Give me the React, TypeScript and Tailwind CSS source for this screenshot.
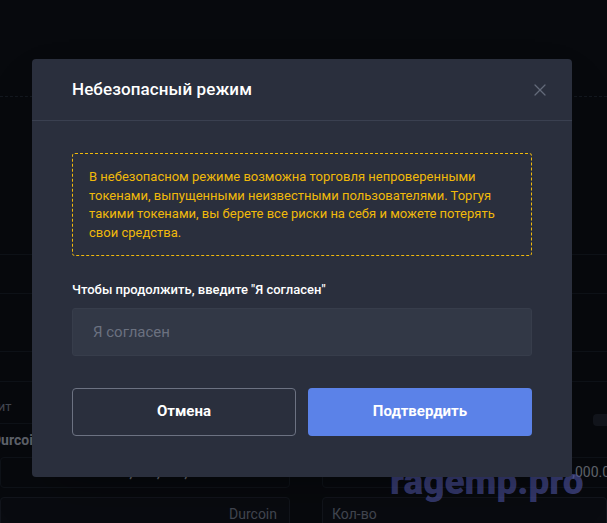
import { X } from "lucide-react";

const App = () => {
    return (
        <div className="relative w-[607px] h-[523px] overflow-hidden bg-[#07090d] font-['Roboto',sans-serif]">
            {/* page behind the overlay */}
            <div className="flex flex-col h-full opacity-60">
                <div className="h-[97px] shrink-0 border-b border-dashed border-[#1c222b]"></div>
                <div className="h-[158px] shrink-0 border-b border-[#141820]"></div>
                <div className="h-[39px] shrink-0 border-b border-[#141820]"></div>
                <div className="h-[58px] shrink-0 border-b border-[#141820]"></div>
                <div className="h-[30px] shrink-0 border-b border-[#141820]"></div>
                <div className="flex gap-8 shrink-0">
                    <div className="w-[290px] flex flex-col">
                        <div className="h-[42px] flex items-center pt-[8px] text-[13px] text-[#6b7280] border-b border-[#141820] -ml-[12px]">мит</div>
                        <div className="h-[33px] flex items-center text-[14px] font-bold text-[#9aa0ab] -ml-[8px]">Durcoin</div>
                        <div className="h-[31px] rounded border border-[#141820] flex items-center justify-end gap-3 pr-3 text-[14px]">
                            <span className="font-bold text-[#9aa0ab]">1,000,000,000</span>
                            <span className="text-[#6b7280]">Максим</span>
                        </div>
                        <div className="mt-[9px] h-[34px] rounded border border-[#1a1e26] bg-[#0b0d12] flex items-center justify-end pr-3 text-[14px] text-[#6b7280]">Durcoin</div>
                    </div>
                    <div className="flex-1 flex flex-col">
                        <div className="h-[75px] flex items-center justify-end -mr-2">
                            <div className="w-[22px] h-[12px] bg-[#1a1e26] rounded-sm"></div>
                        </div>
                        <div className="h-[31px] rounded border border-[#141820] flex items-center justify-end text-[14px] text-[#9aa0ab] -mr-3">00,000.00</div>
                        <div className="mt-[9px] h-[34px] rounded border border-[#1a1e26] bg-[#0b0d12] flex items-center pl-[9px] text-[14px] text-[#6b7280]">Кол-во</div>
                    </div>
                </div>
            </div>

            {/* watermark */}
            <div className="absolute left-[390px] top-[463px] text-[37px] font-black leading-none text-[#4f55a6]/65">ragemp.pro</div>

            {/* modal */}
            <div className="absolute left-[32px] top-[59px] w-[540px] h-[418px] rounded-[4px] bg-[#2a2f3d] shadow-2xl">
                <div className="h-[62px] flex items-center justify-between pl-[40px] pr-[22px] border-b border-[#3a4050]">
                    <h2 className="text-[17px] font-medium text-white tracking-[0.1px]">Небезопасный режим</h2>
                    <X className="w-[20px] h-[20px] text-[#636a7a]" strokeWidth={1.5} />
                </div>
                <div className="px-[40px] pt-[32px]">
                    <div className="border border-dashed border-[#f0b90b] rounded-[3px] px-[16px] pt-[14px] pb-[13px] text-[13px] leading-[18.5px] text-[#f0b90b]">
                        В небезопасном режиме возможна торговля непроверенными токенами, выпущенными неизвестными пользователями. Торгуя такими токенами, вы берете все риски на себя и можете потерять свои средства.
                    </div>
                    <div className="mt-[24px] text-[13px] font-medium text-white">Чтобы продолжить, введите "Я согласен"</div>
                    <input
                        className="mt-[8px] w-full h-[48px] rounded-[3px] bg-[#323846] border border-[#373d4b] px-[20px] text-[15px] text-white placeholder:text-[#6b7180] outline-none"
                        placeholder="Я согласен"
                    />
                    <div className="mt-[32px] grid grid-cols-2 gap-[12px]">
                        <button className="h-[48px] rounded-[4px] border border-[#6c7282] text-white text-[15px] font-bold">Отмена</button>
                        <button className="h-[48px] rounded-[4px] bg-[#5b82e8] text-white text-[15px] font-bold">Подтвердить</button>
                    </div>
                </div>
            </div>
        </div>
    );
};

export default App;
